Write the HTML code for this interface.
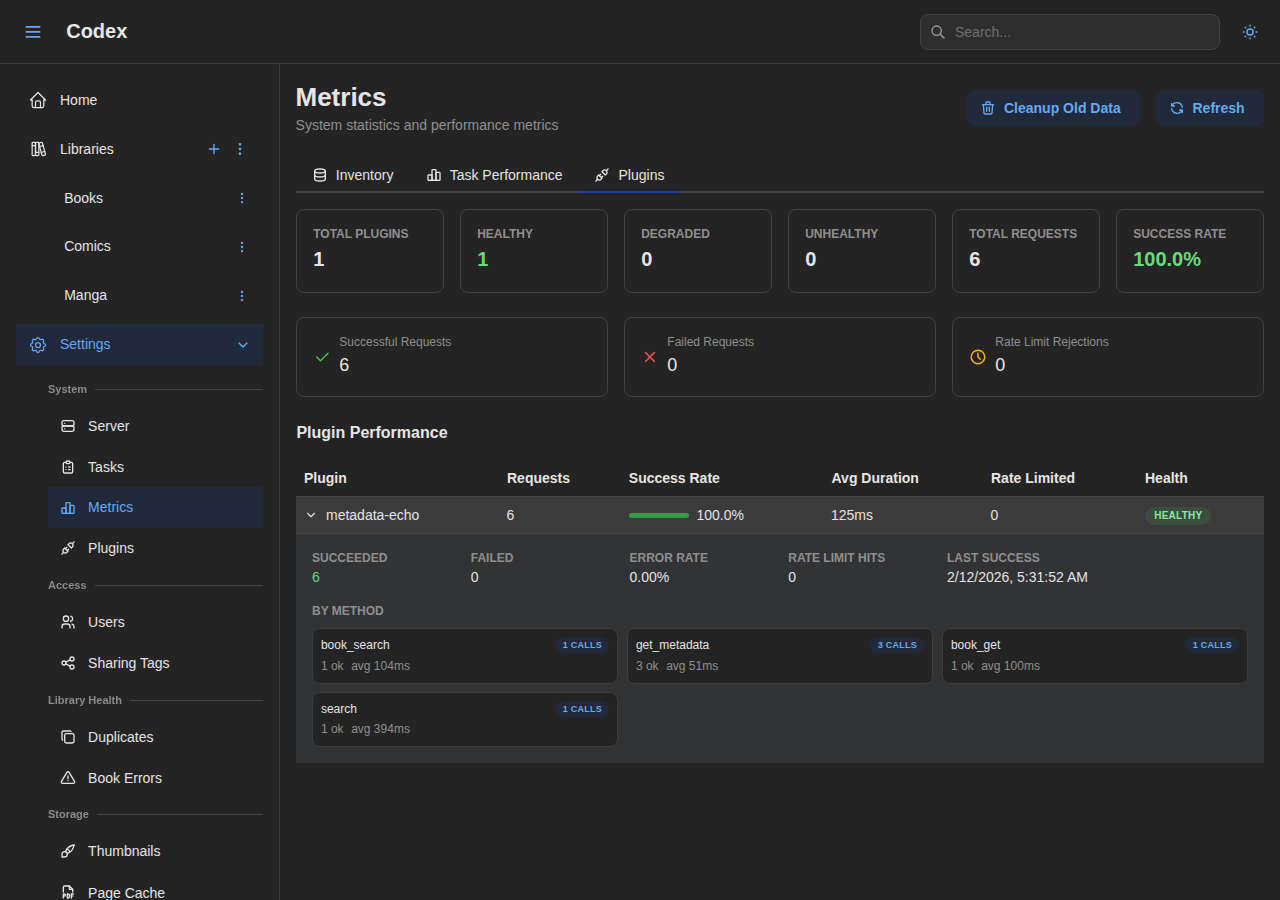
<!DOCTYPE html>
<html><head><meta charset="utf-8"><title>Codex - Metrics</title>
<style>
html,body{margin:0;padding:0;}
body{width:1280px;height:900px;overflow:hidden;background:#242424;font-family:"Liberation Sans", sans-serif;position:relative;}
.t{position:absolute;white-space:nowrap;}
.b{position:absolute;}
</style></head><body>
<div class="b" style="left:0.00px;top:63.00px;width:1280.00px;height:1.00px;background:#373a40"></div>
<svg class="b" style="left:24px;top:24px" width="18" height="16" viewBox="0 0 18 16"><g stroke="#66a8f2" stroke-width="1.6"><path d="M1.75 2.9h14.5M1.75 7.9h14.5M1.75 12.9h14.5"/></g></svg>
<div class="t" style="left:66.20px;top:20.97px;font-size:20px;line-height:20px;font-weight:700;color:#e6e6e6;">Codex</div>
<div class="b" style="left:920.00px;top:14.00px;width:300.00px;height:36.00px;background:#2e2e2e;border:1px solid #424242;border-radius:8px;box-sizing:border-box"></div>
<svg class="b" style="left:930.00px;top:23.50px" width="16" height="16" viewBox="0 0 24 24" fill="none" stroke="#a0a0a0" stroke-width="2" stroke-linecap="round" stroke-linejoin="round"><path d="M10 10m-7 0a7 7 0 1 0 14 0a7 7 0 1 0 -14 0"/><path d="M21 21l-6 -6"/></svg>
<div class="t" style="left:955.00px;top:24.75px;font-size:14px;line-height:14px;font-weight:400;color:#6e6e6e;">Search...</div>
<svg class="b" style="left:1241.00px;top:23.00px" width="18" height="18" viewBox="0 0 24 24" fill="none" stroke="#66a8f2" stroke-width="2" stroke-linecap="round" stroke-linejoin="round"><path d="M12 12m-4 0a4 4 0 1 0 8 0a4 4 0 1 0 -8 0"/><path d="M3 12h1m8 -9v1m8 8h1m-9 8v1m-6.4 -15.4l.7 .7m12.1 -.7l-.7 .7m0 11.4l.7 .7m-12.1 -.7l-.7 .7"/></svg>
<div class="b" style="left:279.00px;top:64.00px;width:1.00px;height:836.00px;background:#373a40"></div>
<svg class="b" style="left:28.00px;top:90.30px" width="20" height="20" viewBox="0 0 24 24" fill="none" stroke="#e4e4e4" stroke-width="1.5" stroke-linecap="round" stroke-linejoin="round"><path d="M5 12l-2 0l9 -9l9 9l-2 0"/><path d="M5 12v7a2 2 0 0 0 2 2h10a2 2 0 0 0 2 -2v-7"/><path d="M9 21v-6a2 2 0 0 1 2 -2h2a2 2 0 0 1 2 2v6"/></svg>
<div class="t" style="left:60.00px;top:93.15px;font-size:14px;line-height:14px;font-weight:400;color:#e4e4e4;">Home</div>
<svg class="b" style="left:28.00px;top:139.20px" width="20" height="20" viewBox="0 0 24 24" fill="none" stroke="#e4e4e4" stroke-width="1.5" stroke-linecap="round" stroke-linejoin="round"><path d="M5 4m0 1a1 1 0 0 1 1 -1h2a1 1 0 0 1 1 1v14a1 1 0 0 1 -1 1h-2a1 1 0 0 1 -1 -1z"/><path d="M9 4m0 1a1 1 0 0 1 1 -1h2a1 1 0 0 1 1 1v14a1 1 0 0 1 -1 1h-2a1 1 0 0 1 -1 -1z"/><path d="M5 8h4"/><path d="M9 16h4"/><path d="M13.803 4.56l2.184 -.53c.562 -.135 1.133 .19 1.282 .732l3.695 13.418a1.02 1.02 0 0 1 -.634 1.219l-.133 .041l-2.184 .53c-.562 .135 -1.133 -.19 -1.282 -.732l-3.695 -13.418a1.02 1.02 0 0 1 .634 -1.219l.133 -.041z"/><path d="M14 9l4 -1"/><path d="M16 16l3.923 -.98"/></svg>
<div class="t" style="left:60.00px;top:142.15px;font-size:14px;line-height:14px;font-weight:400;color:#e4e4e4;">Libraries</div>
<svg class="b" style="left:206.00px;top:141.00px" width="16" height="16" viewBox="0 0 24 24" fill="none" stroke="#66a8f2" stroke-width="2" stroke-linecap="round" stroke-linejoin="round"><path d="M12 5l0 14"/><path d="M5 12l14 0"/></svg>
<svg class="b" style="left:232.00px;top:141.00px" width="16" height="16" viewBox="0 0 24 24" fill="none" stroke="#66a8f2" stroke-width="2" stroke-linecap="round" stroke-linejoin="round"><path d="M12 12m-1 0a1 1 0 1 0 2 0a1 1 0 1 0 -2 0"/><path d="M12 19m-1 0a1 1 0 1 0 2 0a1 1 0 1 0 -2 0"/><path d="M12 5m-1 0a1 1 0 1 0 2 0a1 1 0 1 0 -2 0"/></svg>
<div class="t" style="left:64.20px;top:191.05px;font-size:14px;line-height:14px;font-weight:400;color:#e4e4e4;">Books</div>
<svg class="b" style="left:234.90px;top:191.00px" width="14" height="14" viewBox="0 0 24 24" fill="none" stroke="#66a8f2" stroke-width="2" stroke-linecap="round" stroke-linejoin="round"><path d="M12 12m-1 0a1 1 0 1 0 2 0a1 1 0 1 0 -2 0"/><path d="M12 19m-1 0a1 1 0 1 0 2 0a1 1 0 1 0 -2 0"/><path d="M12 5m-1 0a1 1 0 1 0 2 0a1 1 0 1 0 -2 0"/></svg>
<div class="t" style="left:64.20px;top:239.25px;font-size:14px;line-height:14px;font-weight:400;color:#e4e4e4;">Comics</div>
<svg class="b" style="left:234.90px;top:239.90px" width="14" height="14" viewBox="0 0 24 24" fill="none" stroke="#66a8f2" stroke-width="2" stroke-linecap="round" stroke-linejoin="round"><path d="M12 12m-1 0a1 1 0 1 0 2 0a1 1 0 1 0 -2 0"/><path d="M12 19m-1 0a1 1 0 1 0 2 0a1 1 0 1 0 -2 0"/><path d="M12 5m-1 0a1 1 0 1 0 2 0a1 1 0 1 0 -2 0"/></svg>
<div class="t" style="left:64.20px;top:288.15px;font-size:14px;line-height:14px;font-weight:400;color:#e4e4e4;">Manga</div>
<svg class="b" style="left:234.90px;top:288.80px" width="14" height="14" viewBox="0 0 24 24" fill="none" stroke="#66a8f2" stroke-width="2" stroke-linecap="round" stroke-linejoin="round"><path d="M12 12m-1 0a1 1 0 1 0 2 0a1 1 0 1 0 -2 0"/><path d="M12 19m-1 0a1 1 0 1 0 2 0a1 1 0 1 0 -2 0"/><path d="M12 5m-1 0a1 1 0 1 0 2 0a1 1 0 1 0 -2 0"/></svg>
<div class="b" style="left:16.00px;top:324.00px;width:247.00px;height:41.00px;background:#212a3b"></div>
<svg class="b" style="left:28.00px;top:334.50px" width="20" height="20" viewBox="0 0 24 24" fill="none" stroke="#66a8f2" stroke-width="1.5" stroke-linecap="round" stroke-linejoin="round"><path d="M10.325 4.317c.426 -1.756 2.924 -1.756 3.35 0a1.724 1.724 0 0 0 2.573 1.066c1.543 -.94 3.31 .826 2.37 2.37a1.724 1.724 0 0 0 1.065 2.572c1.756 .426 1.756 2.924 0 3.35a1.724 1.724 0 0 0 -1.066 2.573c.94 1.543 -.826 3.31 -2.37 2.37a1.724 1.724 0 0 0 -2.572 1.065c-.426 1.756 -2.924 1.756 -3.35 0a1.724 1.724 0 0 0 -2.573 -1.066c-1.543 .94 -3.31 -.826 -2.37 -2.37a1.724 1.724 0 0 0 -1.065 -2.572c-1.756 -.426 -1.756 -2.924 0 -3.35a1.724 1.724 0 0 0 1.066 -2.573c-.94 -1.543 .826 -3.31 2.37 -2.37c1 .608 2.296 .07 2.572 -1.065z"/><path d="M9 12a3 3 0 1 0 6 0a3 3 0 0 0 -6 0"/></svg>
<div class="t" style="left:60.00px;top:337.45px;font-size:14px;line-height:14px;font-weight:400;color:#66a8f2;">Settings</div>
<svg class="b" style="left:235.00px;top:336.80px" width="16" height="16" viewBox="0 0 24 24" fill="none" stroke="#66a8f2" stroke-width="2" stroke-linecap="round" stroke-linejoin="round"><path d="M6 9l6 6l6 -6"/></svg>
<div class="t" style="left:48.00px;top:383.99px;font-size:11px;line-height:11px;font-weight:700;color:#8a8a8a;will-change:transform">System</div>
<div class="b" style="left:95.00px;top:389.00px;width:168.00px;height:1.00px;background:#424242"></div>
<svg class="b" style="left:60.00px;top:418.00px" width="16" height="16" viewBox="0 0 24 24" fill="none" stroke="#e4e4e4" stroke-width="2" stroke-linecap="round" stroke-linejoin="round"><path d="M3 4m0 3a3 3 0 0 1 3 -3h12a3 3 0 0 1 3 3v2a3 3 0 0 1 -3 3h-12a3 3 0 0 1 -3 -3z"/><path d="M3 12m0 3a3 3 0 0 1 3 -3h12a3 3 0 0 1 3 3v2a3 3 0 0 1 -3 3h-12a3 3 0 0 1 -3 -3z"/><path d="M7 8l0 .01"/><path d="M7 16l0 .01"/></svg>
<div class="t" style="left:88.10px;top:419.25px;font-size:14px;line-height:14px;font-weight:400;color:#e4e4e4;">Server</div>
<svg class="b" style="left:60.00px;top:459.10px" width="16" height="16" viewBox="0 0 24 24" fill="none" stroke="#e4e4e4" stroke-width="2" stroke-linecap="round" stroke-linejoin="round"><path d="M9 5h-2a2 2 0 0 0 -2 2v12a2 2 0 0 0 2 2h10a2 2 0 0 0 2 -2v-12a2 2 0 0 0 -2 -2h-2"/><path d="M9 3m0 2a2 2 0 0 1 2 -2h2a2 2 0 0 1 2 2v0a2 2 0 0 1 -2 2h-2a2 2 0 0 1 -2 -2z"/><path d="M9 12l.01 0"/><path d="M13 12l2 0"/><path d="M9 16l.01 0"/><path d="M13 16l2 0"/></svg>
<div class="t" style="left:88.10px;top:460.35px;font-size:14px;line-height:14px;font-weight:400;color:#e4e4e4;">Tasks</div>
<div class="b" style="left:48.00px;top:487.20px;width:215.00px;height:40.70px;background:#212a3b"></div>
<svg class="b" style="left:60.00px;top:499.60px" width="16" height="16" viewBox="0 0 24 24" fill="none" stroke="#66a8f2" stroke-width="2" stroke-linecap="round" stroke-linejoin="round"><path d="M3 13a1 1 0 0 1 1 -1h4a1 1 0 0 1 1 1v6a1 1 0 0 1 -1 1h-4a1 1 0 0 1 -1 -1z"/><path d="M15 9a1 1 0 0 1 1 -1h4a1 1 0 0 1 1 1v10a1 1 0 0 1 -1 1h-4a1 1 0 0 1 -1 -1z"/><path d="M9 5a1 1 0 0 1 1 -1h4a1 1 0 0 1 1 1v14a1 1 0 0 1 -1 1h-4a1 1 0 0 1 -1 -1z"/><path d="M4 20h14"/></svg>
<div class="t" style="left:88.10px;top:499.95px;font-size:14px;line-height:14px;font-weight:400;color:#66a8f2;">Metrics</div>
<svg class="b" style="left:60.00px;top:540.20px" width="16" height="16" viewBox="0 0 24 24" fill="none" stroke="#e4e4e4" stroke-width="2" stroke-linecap="round" stroke-linejoin="round"><path d="M7 12l5 5l-1.5 1.5a3.536 3.536 0 1 1 -5 -5l1.5 -1.5z"/><path d="M17 12l-5 -5l1.5 -1.5a3.536 3.536 0 1 1 5 5l-1.5 1.5z"/><path d="M3 21l2.5 -2.5"/><path d="M18.5 5.5l2.5 -2.5"/><path d="M10 11l-2 2"/><path d="M13 14l-2 2"/></svg>
<div class="t" style="left:88.10px;top:541.45px;font-size:14px;line-height:14px;font-weight:400;color:#e4e4e4;">Plugins</div>
<div class="t" style="left:48.00px;top:580.29px;font-size:11px;line-height:11px;font-weight:700;color:#8a8a8a;will-change:transform">Access</div>
<div class="b" style="left:95.00px;top:585.00px;width:168.00px;height:1.00px;background:#424242"></div>
<svg class="b" style="left:60.00px;top:614.20px" width="16" height="16" viewBox="0 0 24 24" fill="none" stroke="#e4e4e4" stroke-width="2" stroke-linecap="round" stroke-linejoin="round"><path d="M9 7m-4 0a4 4 0 1 0 8 0a4 4 0 1 0 -8 0"/><path d="M3 21v-2a4 4 0 0 1 4 -4h4a4 4 0 0 1 4 4v2"/><path d="M16 3.13a4 4 0 0 1 0 7.75"/><path d="M21 21v-2a4 4 0 0 0 -3 -3.85"/></svg>
<div class="t" style="left:88.10px;top:615.45px;font-size:14px;line-height:14px;font-weight:400;color:#e4e4e4;">Users</div>
<svg class="b" style="left:60.00px;top:655.10px" width="16" height="16" viewBox="0 0 24 24" fill="none" stroke="#e4e4e4" stroke-width="2" stroke-linecap="round" stroke-linejoin="round"><path d="M6 12m-3 0a3 3 0 1 0 6 0a3 3 0 1 0 -6 0"/><path d="M18 6m-3 0a3 3 0 1 0 6 0a3 3 0 1 0 -6 0"/><path d="M18 18m-3 0a3 3 0 1 0 6 0a3 3 0 1 0 -6 0"/><path d="M8.7 10.7l6.6 -3.4"/><path d="M8.7 13.3l6.6 3.4"/></svg>
<div class="t" style="left:88.10px;top:656.35px;font-size:14px;line-height:14px;font-weight:400;color:#e4e4e4;">Sharing Tags</div>
<div class="t" style="left:48.00px;top:695.09px;font-size:11px;line-height:11px;font-weight:700;color:#8a8a8a;will-change:transform">Library Health</div>
<div class="b" style="left:130.00px;top:700.00px;width:133.00px;height:1.00px;background:#424242"></div>
<svg class="b" style="left:60.00px;top:729.10px" width="16" height="16" viewBox="0 0 24 24" fill="none" stroke="#e4e4e4" stroke-width="2" stroke-linecap="round" stroke-linejoin="round"><path d="M7 7m0 2.667a2.667 2.667 0 0 1 2.667 -2.667h8.666a2.667 2.667 0 0 1 2.667 2.667v8.666a2.667 2.667 0 0 1 -2.667 2.667h-8.666a2.667 2.667 0 0 1 -2.667 -2.667z"/><path d="M4.012 16.737a2.005 2.005 0 0 1 -1.012 -1.737v-10c0 -1.1 .9 -2 2 -2h10c.75 0 1.158 .385 1.5 1"/></svg>
<div class="t" style="left:88.10px;top:730.35px;font-size:14px;line-height:14px;font-weight:400;color:#e4e4e4;">Duplicates</div>
<svg class="b" style="left:60.00px;top:770.00px" width="16" height="16" viewBox="0 0 24 24" fill="none" stroke="#e4e4e4" stroke-width="2" stroke-linecap="round" stroke-linejoin="round"><path d="M12 9v4"/><path d="M10.363 3.591l-8.106 13.534a1.914 1.914 0 0 0 1.636 2.871h16.214a1.914 1.914 0 0 0 1.636 -2.87l-8.106 -13.536a1.914 1.914 0 0 0 -3.274 0z"/><path d="M12 16h.01"/></svg>
<div class="t" style="left:88.10px;top:771.25px;font-size:14px;line-height:14px;font-weight:400;color:#e4e4e4;">Book Errors</div>
<div class="t" style="left:48.00px;top:809.19px;font-size:11px;line-height:11px;font-weight:700;color:#8a8a8a;will-change:transform">Storage</div>
<div class="b" style="left:97.00px;top:814.00px;width:166.00px;height:1.00px;background:#424242"></div>
<svg class="b" style="left:60.00px;top:842.90px" width="16" height="16" viewBox="0 0 24 24" fill="none" stroke="#e4e4e4" stroke-width="2" stroke-linecap="round" stroke-linejoin="round"><path d="M3 21v-4a4 4 0 1 1 4 4h-4"/><path d="M21 3a16 16 0 0 0 -12.8 10.2"/><path d="M21 3a16 16 0 0 1 -10.2 12.8"/><path d="M10.6 9a9 9 0 0 1 4.4 4.4"/></svg>
<div class="t" style="left:88.10px;top:844.15px;font-size:14px;line-height:14px;font-weight:400;color:#e4e4e4;">Thumbnails</div>
<svg class="b" style="left:60.00px;top:884.30px" width="16" height="16" viewBox="0 0 24 24" fill="none" stroke="#e4e4e4" stroke-width="2" stroke-linecap="round" stroke-linejoin="round"><path d="M14 3v4a1 1 0 0 0 1 1h4"/><path d="M5 12v-7a2 2 0 0 1 2 -2h7l5 5v4"/><path d="M5 18h1.5a1.5 1.5 0 0 0 0 -3h-1.5v6"/><path d="M17 18h2"/><path d="M20 15h-3v6"/><path d="M11 15v6h1a2 2 0 0 0 2 -2v-2a2 2 0 0 0 -2 -2h-1z"/></svg>
<div class="t" style="left:88.10px;top:885.55px;font-size:14px;line-height:14px;font-weight:400;color:#e4e4e4;">Page Cache</div>
<div class="t" style="left:295.50px;top:84.09px;font-size:26px;line-height:26px;font-weight:700;color:#e6e6e6;">Metrics</div>
<div class="t" style="left:295.60px;top:117.85px;font-size:14px;line-height:14px;font-weight:400;color:#8f8f8f;">System statistics and performance metrics</div>
<div class="b" style="left:967.00px;top:90.00px;width:173.00px;height:36.00px;background:#212a3b;border-radius:8px"></div>
<svg class="b" style="left:980.00px;top:100.00px" width="16" height="16" viewBox="0 0 24 24" fill="none" stroke="#66a8f2" stroke-width="2" stroke-linecap="round" stroke-linejoin="round"><path d="M4 7l16 0"/><path d="M10 11l0 6"/><path d="M14 11l0 6"/><path d="M5 7l1 12a2 2 0 0 0 2 2h8a2 2 0 0 0 2 -2l1 -12"/><path d="M9 7v-3a1 1 0 0 1 1 -1h4a1 1 0 0 1 1 1v3"/></svg>
<div class="t" style="left:1004.00px;top:101.40px;font-size:14px;line-height:14px;font-weight:700;color:#66a8f2;">Cleanup Old Data</div>
<div class="b" style="left:1156.00px;top:90.00px;width:108.00px;height:36.00px;background:#212a3b;border-radius:8px"></div>
<svg class="b" style="left:1168.50px;top:100.00px" width="16" height="16" viewBox="0 0 24 24" fill="none" stroke="#66a8f2" stroke-width="2" stroke-linecap="round" stroke-linejoin="round"><path d="M20 11a8.1 8.1 0 0 0 -15.5 -2m-.5 -4v4h4"/><path d="M4 13a8.1 8.1 0 0 0 15.5 2m.5 4v-4h-4"/></svg>
<div class="t" style="left:1192.50px;top:101.40px;font-size:14px;line-height:14px;font-weight:700;color:#66a8f2;">Refresh</div>
<div class="b" style="left:296.00px;top:191.00px;width:968.00px;height:2.00px;background:#434343"></div>
<div class="b" style="left:578.00px;top:191.00px;width:102.00px;height:2.00px;background:#1f4199"></div>
<svg class="b" style="left:312.00px;top:167.00px" width="16" height="16" viewBox="0 0 24 24" fill="none" stroke="#e4e4e4" stroke-width="2" stroke-linecap="round" stroke-linejoin="round"><path d="M12 6m-8 0a8 3 0 1 0 16 0a8 3 0 1 0 -16 0"/><path d="M4 6v6a8 3 0 0 0 16 0v-6"/><path d="M4 12v6a8 3 0 0 0 16 0v-6"/></svg>
<div class="t" style="left:335.80px;top:168.15px;font-size:14px;line-height:14px;font-weight:400;color:#e4e4e4;">Inventory</div>
<svg class="b" style="left:426.00px;top:167.00px" width="16" height="16" viewBox="0 0 24 24" fill="none" stroke="#e4e4e4" stroke-width="2" stroke-linecap="round" stroke-linejoin="round"><path d="M3 13a1 1 0 0 1 1 -1h4a1 1 0 0 1 1 1v6a1 1 0 0 1 -1 1h-4a1 1 0 0 1 -1 -1z"/><path d="M15 9a1 1 0 0 1 1 -1h4a1 1 0 0 1 1 1v10a1 1 0 0 1 -1 1h-4a1 1 0 0 1 -1 -1z"/><path d="M9 5a1 1 0 0 1 1 -1h4a1 1 0 0 1 1 1v14a1 1 0 0 1 -1 1h-4a1 1 0 0 1 -1 -1z"/><path d="M4 20h14"/></svg>
<div class="t" style="left:449.70px;top:168.15px;font-size:14px;line-height:14px;font-weight:400;color:#e4e4e4;">Task Performance</div>
<svg class="b" style="left:594.00px;top:167.00px" width="16" height="16" viewBox="0 0 24 24" fill="none" stroke="#e4e4e4" stroke-width="2" stroke-linecap="round" stroke-linejoin="round"><path d="M7 12l5 5l-1.5 1.5a3.536 3.536 0 1 1 -5 -5l1.5 -1.5z"/><path d="M17 12l-5 -5l1.5 -1.5a3.536 3.536 0 1 1 5 5l-1.5 1.5z"/><path d="M3 21l2.5 -2.5"/><path d="M18.5 5.5l2.5 -2.5"/><path d="M10 11l-2 2"/><path d="M13 14l-2 2"/></svg>
<div class="t" style="left:618.50px;top:168.15px;font-size:14px;line-height:14px;font-weight:400;color:#e4e4e4;">Plugins</div>
<div class="b" style="left:296.00px;top:209.00px;width:148.00px;height:84.00px;border:1px solid #424242;border-radius:8px;box-sizing:border-box"></div>
<div class="t" style="left:313.20px;top:227.84px;font-size:12px;line-height:12px;font-weight:700;color:#8f8f8f;">TOTAL PLUGINS</div>
<div class="t" style="left:313.20px;top:248.87px;font-size:20px;line-height:20px;font-weight:700;color:#e6e6e6;">1</div>
<div class="b" style="left:460.00px;top:209.00px;width:148.00px;height:84.00px;border:1px solid #424242;border-radius:8px;box-sizing:border-box"></div>
<div class="t" style="left:477.20px;top:227.84px;font-size:12px;line-height:12px;font-weight:700;color:#8f8f8f;">HEALTHY</div>
<div class="t" style="left:477.20px;top:248.87px;font-size:20px;line-height:20px;font-weight:700;color:#69db7c;">1</div>
<div class="b" style="left:624.00px;top:209.00px;width:148.00px;height:84.00px;border:1px solid #424242;border-radius:8px;box-sizing:border-box"></div>
<div class="t" style="left:641.20px;top:227.84px;font-size:12px;line-height:12px;font-weight:700;color:#8f8f8f;">DEGRADED</div>
<div class="t" style="left:641.20px;top:248.87px;font-size:20px;line-height:20px;font-weight:700;color:#e6e6e6;">0</div>
<div class="b" style="left:788.00px;top:209.00px;width:148.00px;height:84.00px;border:1px solid #424242;border-radius:8px;box-sizing:border-box"></div>
<div class="t" style="left:805.20px;top:227.84px;font-size:12px;line-height:12px;font-weight:700;color:#8f8f8f;">UNHEALTHY</div>
<div class="t" style="left:805.20px;top:248.87px;font-size:20px;line-height:20px;font-weight:700;color:#e6e6e6;">0</div>
<div class="b" style="left:952.00px;top:209.00px;width:148.00px;height:84.00px;border:1px solid #424242;border-radius:8px;box-sizing:border-box"></div>
<div class="t" style="left:969.20px;top:227.84px;font-size:12px;line-height:12px;font-weight:700;color:#8f8f8f;">TOTAL REQUESTS</div>
<div class="t" style="left:969.20px;top:248.87px;font-size:20px;line-height:20px;font-weight:700;color:#e6e6e6;">6</div>
<div class="b" style="left:1116.00px;top:209.00px;width:148.00px;height:84.00px;border:1px solid #424242;border-radius:8px;box-sizing:border-box"></div>
<div class="t" style="left:1133.20px;top:227.84px;font-size:12px;line-height:12px;font-weight:700;color:#8f8f8f;">SUCCESS RATE</div>
<div class="t" style="left:1133.20px;top:248.87px;font-size:20px;line-height:20px;font-weight:700;color:#69db7c;">100.0%</div>
<div class="b" style="left:296.00px;top:317.00px;width:312.00px;height:80.00px;border:1px solid #424242;border-radius:8px;box-sizing:border-box"></div>
<svg class="b" style="left:313.00px;top:347.80px" width="18" height="18" viewBox="0 0 24 24" fill="none" stroke="#40c057" stroke-width="2" stroke-linecap="round" stroke-linejoin="round"><path d="M5 12l5 5l10 -10"/></svg>
<div class="t" style="left:339.30px;top:335.74px;font-size:12px;line-height:12px;font-weight:400;color:#8f8f8f;">Successful Requests</div>
<div class="t" style="left:339.20px;top:355.66px;font-size:18px;line-height:18px;font-weight:400;color:#e6e6e6;">6</div>
<div class="b" style="left:624.00px;top:317.00px;width:312.00px;height:80.00px;border:1px solid #424242;border-radius:8px;box-sizing:border-box"></div>
<svg class="b" style="left:641.00px;top:347.80px" width="18" height="18" viewBox="0 0 24 24" fill="none" stroke="#fa5252" stroke-width="2" stroke-linecap="round" stroke-linejoin="round"><path d="M18 6l-12 12"/><path d="M6 6l12 12"/></svg>
<div class="t" style="left:667.30px;top:335.74px;font-size:12px;line-height:12px;font-weight:400;color:#8f8f8f;">Failed Requests</div>
<div class="t" style="left:667.20px;top:355.66px;font-size:18px;line-height:18px;font-weight:400;color:#e6e6e6;">0</div>
<div class="b" style="left:952.00px;top:317.00px;width:312.00px;height:80.00px;border:1px solid #424242;border-radius:8px;box-sizing:border-box"></div>
<svg class="b" style="left:969.00px;top:347.80px" width="18" height="18" viewBox="0 0 24 24" fill="none" stroke="#fab005" stroke-width="2" stroke-linecap="round" stroke-linejoin="round"><path d="M3 12a9 9 0 1 0 18 0a9 9 0 0 0 -18 0"/><path d="M12 7v5l3 3"/></svg>
<div class="t" style="left:995.30px;top:335.74px;font-size:12px;line-height:12px;font-weight:400;color:#8f8f8f;">Rate Limit Rejections</div>
<div class="t" style="left:995.20px;top:355.66px;font-size:18px;line-height:18px;font-weight:400;color:#e6e6e6;">0</div>
<div class="t" style="left:296.40px;top:424.56px;font-size:16px;line-height:16px;font-weight:700;color:#e6e6e6;">Plugin Performance</div>
<div class="t" style="left:304.00px;top:471.05px;font-size:14px;line-height:14px;font-weight:700;color:#e6e6e6;">Plugin</div>
<div class="t" style="left:507.00px;top:471.05px;font-size:14px;line-height:14px;font-weight:700;color:#e6e6e6;">Requests</div>
<div class="t" style="left:628.80px;top:471.05px;font-size:14px;line-height:14px;font-weight:700;color:#e6e6e6;">Success Rate</div>
<div class="t" style="left:831.50px;top:471.05px;font-size:14px;line-height:14px;font-weight:700;color:#e6e6e6;">Avg Duration</div>
<div class="t" style="left:991.00px;top:471.05px;font-size:14px;line-height:14px;font-weight:700;color:#e6e6e6;">Rate Limited</div>
<div class="t" style="left:1145.00px;top:471.05px;font-size:14px;line-height:14px;font-weight:700;color:#e6e6e6;">Health</div>
<div class="b" style="left:296.00px;top:496.00px;width:968.00px;height:37.00px;background:#3b3b3b"></div>
<div class="b" style="left:296.00px;top:496.00px;width:968.00px;height:1.00px;background:#424242"></div>
<div class="b" style="left:296.00px;top:533.00px;width:968.00px;height:1.00px;background:#444444"></div>
<svg class="b" style="left:304.00px;top:508.00px" width="14" height="14" viewBox="0 0 24 24" fill="none" stroke="#e4e4e4" stroke-width="2" stroke-linecap="round" stroke-linejoin="round"><path d="M6 9l6 6l6 -6"/></svg>
<div class="t" style="left:326.00px;top:508.15px;font-size:14px;line-height:14px;font-weight:400;color:#e4e4e4;">metadata-echo</div>
<div class="t" style="left:506.50px;top:508.15px;font-size:14px;line-height:14px;font-weight:400;color:#e4e4e4;">6</div>
<div class="b" style="left:629.00px;top:513.00px;width:60.00px;height:5.00px;background:#2f9e44;border-radius:3px"></div>
<div class="t" style="left:696.50px;top:508.15px;font-size:14px;line-height:14px;font-weight:400;color:#e4e4e4;">100.0%</div>
<div class="t" style="left:831.00px;top:508.15px;font-size:14px;line-height:14px;font-weight:400;color:#e4e4e4;">125ms</div>
<div class="t" style="left:990.50px;top:508.15px;font-size:14px;line-height:14px;font-weight:400;color:#e4e4e4;">0</div>
<div class="b" style="left:1145.00px;top:507.00px;width:66.00px;height:18.00px;background:#3b4e3e;border-radius:9px"></div>
<div class="t" style="left:1154.20px;top:511.24px;font-size:10px;line-height:10px;font-weight:700;color:#8ce99a;letter-spacing:0.25px">HEALTHY</div>
<div class="b" style="left:296.00px;top:534.00px;width:968.00px;height:229.00px;background:#323335"></div>
<div class="t" style="left:312.00px;top:552.14px;font-size:12px;line-height:12px;font-weight:700;color:#8f8f8f;">SUCCEEDED</div>
<div class="t" style="left:312.00px;top:570.15px;font-size:14px;line-height:14px;font-weight:400;color:#69db7c;">6</div>
<div class="t" style="left:470.75px;top:552.14px;font-size:12px;line-height:12px;font-weight:700;color:#8f8f8f;">FAILED</div>
<div class="t" style="left:470.75px;top:570.15px;font-size:14px;line-height:14px;font-weight:400;color:#e4e4e4;">0</div>
<div class="t" style="left:629.50px;top:552.14px;font-size:12px;line-height:12px;font-weight:700;color:#8f8f8f;">ERROR RATE</div>
<div class="t" style="left:629.50px;top:570.15px;font-size:14px;line-height:14px;font-weight:400;color:#e4e4e4;">0.00%</div>
<div class="t" style="left:788.25px;top:552.14px;font-size:12px;line-height:12px;font-weight:700;color:#8f8f8f;">RATE LIMIT HITS</div>
<div class="t" style="left:788.25px;top:570.15px;font-size:14px;line-height:14px;font-weight:400;color:#e4e4e4;">0</div>
<div class="t" style="left:947.00px;top:552.14px;font-size:12px;line-height:12px;font-weight:700;color:#8f8f8f;">LAST SUCCESS</div>
<div class="t" style="left:947.00px;top:570.15px;font-size:14px;line-height:14px;font-weight:400;color:#e4e4e4;">2/12/2026, 5:31:52 AM</div>
<div class="t" style="left:312.00px;top:605.04px;font-size:12px;line-height:12px;font-weight:700;color:#8f8f8f;">BY METHOD</div>
<div class="b" style="left:312.00px;top:628.00px;width:306.00px;height:56.00px;background:#242424;border:1px solid #3d3d3d;border-radius:8px;box-sizing:border-box"></div>
<div class="t" style="left:320.90px;top:638.84px;font-size:12px;line-height:12px;font-weight:400;color:#e4e4e4;">book_search</div>
<div class="t" style="left:320.90px;top:659.84px;font-size:12px;line-height:12px;font-weight:400;color:#8f8f8f;">1 ok</div>
<div class="t" style="left:351.20px;top:659.84px;font-size:12px;line-height:12px;font-weight:400;color:#8f8f8f;">avg 104ms</div>
<div class="b" style="left:555.00px;top:637.00px;width:54.00px;height:16.00px;background:#212a3b;border-radius:8px"></div>
<div class="t" style="left:562.80px;top:640.58px;font-size:9px;line-height:9px;font-weight:700;color:#66a8f2;letter-spacing:0.25px">1 CALLS</div>
<div class="b" style="left:627.00px;top:628.00px;width:306.00px;height:56.00px;background:#242424;border:1px solid #3d3d3d;border-radius:8px;box-sizing:border-box"></div>
<div class="t" style="left:635.90px;top:638.84px;font-size:12px;line-height:12px;font-weight:400;color:#e4e4e4;">get_metadata</div>
<div class="t" style="left:635.90px;top:659.84px;font-size:12px;line-height:12px;font-weight:400;color:#8f8f8f;">3 ok</div>
<div class="t" style="left:666.20px;top:659.84px;font-size:12px;line-height:12px;font-weight:400;color:#8f8f8f;">avg 51ms</div>
<div class="b" style="left:870.00px;top:637.00px;width:54.00px;height:16.00px;background:#212a3b;border-radius:8px"></div>
<div class="t" style="left:877.80px;top:640.58px;font-size:9px;line-height:9px;font-weight:700;color:#66a8f2;letter-spacing:0.25px">3 CALLS</div>
<div class="b" style="left:942.00px;top:628.00px;width:306.00px;height:56.00px;background:#242424;border:1px solid #3d3d3d;border-radius:8px;box-sizing:border-box"></div>
<div class="t" style="left:950.90px;top:638.84px;font-size:12px;line-height:12px;font-weight:400;color:#e4e4e4;">book_get</div>
<div class="t" style="left:950.90px;top:659.84px;font-size:12px;line-height:12px;font-weight:400;color:#8f8f8f;">1 ok</div>
<div class="t" style="left:981.20px;top:659.84px;font-size:12px;line-height:12px;font-weight:400;color:#8f8f8f;">avg 100ms</div>
<div class="b" style="left:1185.00px;top:637.00px;width:54.00px;height:16.00px;background:#212a3b;border-radius:8px"></div>
<div class="t" style="left:1192.80px;top:640.58px;font-size:9px;line-height:9px;font-weight:700;color:#66a8f2;letter-spacing:0.25px">1 CALLS</div>
<div class="b" style="left:312.00px;top:692.00px;width:306.00px;height:55.00px;background:#242424;border:1px solid #3d3d3d;border-radius:8px;box-sizing:border-box"></div>
<div class="t" style="left:320.90px;top:703.14px;font-size:12px;line-height:12px;font-weight:400;color:#e4e4e4;">search</div>
<div class="t" style="left:320.90px;top:723.34px;font-size:12px;line-height:12px;font-weight:400;color:#8f8f8f;">1 ok</div>
<div class="t" style="left:351.20px;top:723.34px;font-size:12px;line-height:12px;font-weight:400;color:#8f8f8f;">avg 394ms</div>
<div class="b" style="left:555.00px;top:701.00px;width:54.00px;height:16.00px;background:#212a3b;border-radius:8px"></div>
<div class="t" style="left:562.80px;top:704.58px;font-size:9px;line-height:9px;font-weight:700;color:#66a8f2;letter-spacing:0.25px">1 CALLS</div>
</body></html>
